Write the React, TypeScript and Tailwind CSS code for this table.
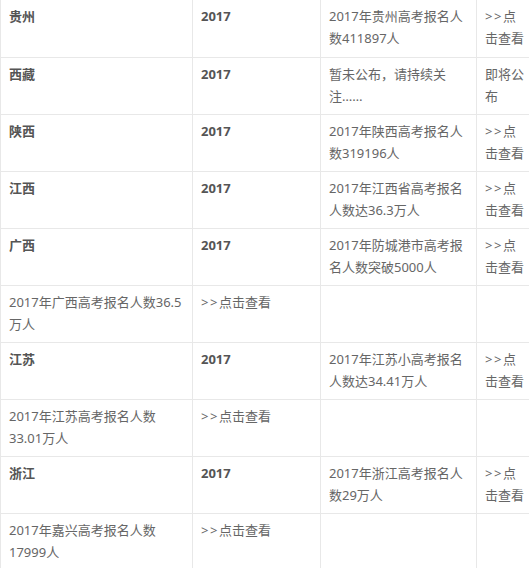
import React from 'react';

type Row = {
  cells: string[][];
  bold?: boolean;
};

// each cell is a list of lines, broken as in the original page
const rows: Row[] = [
  { bold: true, cells: [['贵州'], ['2017'], ['2017年贵州高考报名人', '数411897人'], ['>>点', '击查看']] },
  { bold: true, cells: [['西藏'], ['2017'], ['暂未公布，请持续关', '注……'], ['即将公', '布']] },
  { bold: true, cells: [['陕西'], ['2017'], ['2017年陕西高考报名人', '数319196人'], ['>>点', '击查看']] },
  { bold: true, cells: [['江西'], ['2017'], ['2017年江西省高考报名', '人数达36.3万人'], ['>>点', '击查看']] },
  { bold: true, cells: [['广西'], ['2017'], ['2017年防城港市高考报', '名人数突破5000人'], ['>>点', '击查看']] },
  { cells: [['2017年广西高考报名人数36.5', '万人'], ['>>点击查看'], [], []] },
  { bold: true, cells: [['江苏'], ['2017'], ['2017年江苏小高考报名', '人数达34.41万人'], ['>>点', '击查看']] },
  { cells: [['2017年江苏高考报名人数', '33.01万人'], ['>>点击查看'], [], []] },
  { bold: true, cells: [['浙江'], ['2017'], ['2017年浙江高考报名人', '数29万人'], ['>>点', '击查看']] },
  { cells: [['2017年嘉兴高考报名人数', '17999人'], ['>>点击查看'], [], []] },
];

const Line = ({ text }: { text: string }) => {
  if (text.startsWith('>>')) {
    return (
      <>
        <span className="tracking-[1.5px]">&gt;&gt;</span>
        {text.slice(2)}
      </>
    );
  }
  return <>{text}</>;
};

const Cell = ({ lines, bold, last }: { lines: string[]; bold: boolean; last: boolean }) => (
  <td
    className={`align-top border-x border-b border-[#e8e8e8] pt-[5px] pb-[6px] pl-2 ${
      last ? 'pr-0' : 'pr-2'
    } h-[57px]`}
  >
    {lines.map((line, i) => (
      <div
        key={i}
        className={`whitespace-nowrap ${bold ? 'font-bold text-[#555]' : 'text-[#666]'}`}
      >
        <Line text={line} />
      </div>
    ))}
  </td>
);

export default function App() {
  return (
    <div className="w-[529px] h-[568px] overflow-hidden bg-white">
      <table
        className="table-fixed border-collapse w-[529px] text-[13px] leading-[22px]"
        style={{ fontFamily: '"Noto Sans", "Noto Sans CJK SC", sans-serif' }}
      >
        <colgroup>
          <col className="w-[192px]" />
          <col className="w-[128px]" />
          <col className="w-[156px]" />
          <col className="w-[53px]" />
        </colgroup>
        <tbody>
          {rows.map((row, r) => (
            <tr key={r}>
              {row.cells.map((lines, c) => (
                <Cell
                  key={c}
                  lines={lines}
                  bold={!!row.bold && c < 2}
                  last={c === 3}
                />
              ))}
            </tr>
          ))}
        </tbody>
      </table>
    </div>
  );
}
